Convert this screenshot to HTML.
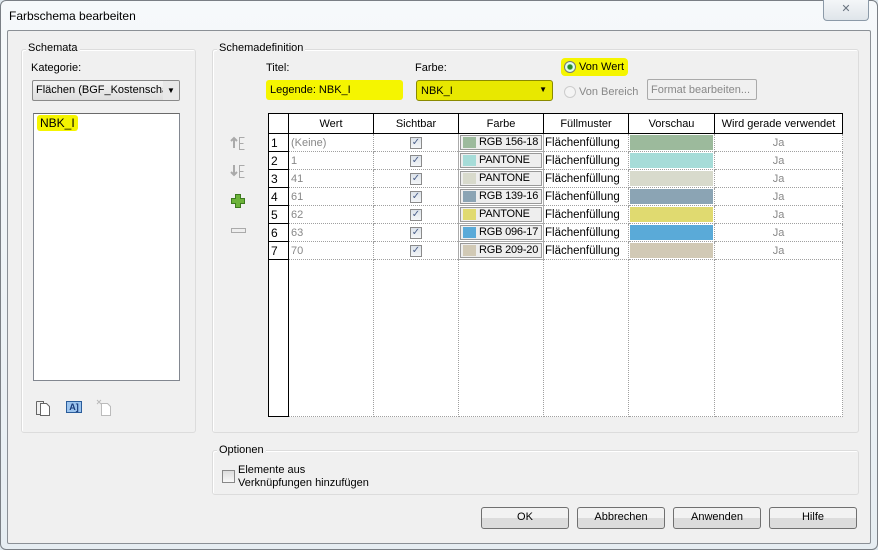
<!DOCTYPE html>
<html><head><meta charset="utf-8"><style>
*{box-sizing:border-box;margin:0;padding:0}
body{width:878px;height:550px;overflow:hidden;background:#dfe8ee;font-family:"Liberation Sans",sans-serif;font-size:11px;color:#000;position:relative}
.a{position:absolute}
.win{left:0;top:0;width:878px;height:550px;background:linear-gradient(#f6f9fb,#e6edf2);border:1px solid #7a7f85;border-radius:6px}
.panel{left:7px;top:30px;width:864px;height:514px;background:#f0f0f0;border:1px solid #8b9096;border-radius:2px}
.grp{border:1px solid #dcdcdc;border-radius:3px;box-shadow:inset 1px 1px 0 #fff}
.lbl{background:#f0f0f0;padding:0 2px}
.btn{border:1px solid #707070;border-radius:3px;background:linear-gradient(#f2f2f2 50%,#dcdcdc 50%);text-align:center;line-height:19px}
table{border-collapse:collapse;table-layout:fixed;position:absolute;left:268px;top:113px;width:574px;background:#fff;font-size:11px}
td,th{height:17px;border:1px dotted #a0a0a0;padding:1px 2px 0;white-space:nowrap;overflow:hidden;line-height:15px}
th{font-weight:normal;height:20px;border:1px solid #000;background:#fff;text-align:center}
td.n{border:1px solid #000;background:#fff;font-size:12px}
td.g{color:#888}
.cb{display:inline-block;width:12px;height:12px;border:1px solid #8a8a8a;background:linear-gradient(#dde3ea,#f4f6f8);font-size:10px;line-height:10px;color:#4a5f8a;text-align:center;vertical-align:middle}
.fb{padding:0 1px;border:1px solid #aaa}
.fb div{display:flex;align-items:center;height:15px;border:1px solid #999;background:#eee;font-size:11px;overflow:hidden;letter-spacing:-0.2px}
.fb span{display:inline-block;flex:none;width:13px;height:11px;margin:0 3px 0 2px}
.pv{padding:1px}
.pv div{height:15px}
.ff{font-size:11.5px;padding:1px 1px 0}
</style></head><body>
<div class="a win"></div>
<div class="a" style="left:9px;top:9px;font-size:12px">Farbschema bearbeiten</div>
<div class="a" style="left:823px;top:0;width:46px;height:21px;border:1px solid #8c9aa8;border-top:none;border-radius:0 0 4px 4px;background:linear-gradient(#f4f6f8,#dfe5ea);text-align:center;color:#6a7480;font-size:11px;line-height:19px">✕</div>
<div class="a panel"></div>

<div class="a grp" style="left:21px;top:49px;width:175px;height:384px"></div>
<div class="a lbl" style="left:26px;top:42px">Schemata</div>
<div class="a" style="left:31px;top:62px">Kategorie:</div>
<div class="a" style="left:32px;top:80px;width:148px;height:21px;border:1px solid #8a8a8a;border-radius:2px;background:linear-gradient(#f4f4f4,#dedede);padding:3px 3px;white-space:nowrap;overflow:hidden">Flächen (BGF_Kostenschä<span style="position:absolute;right:0;top:0;width:16px;height:19px;background:#e8e8e8;font-size:8px;line-height:19px;text-align:center">▼</span></div>
<div class="a" style="left:33px;top:113px;width:147px;height:268px;background:#fff;border:1px solid #828790;border-top-color:#6a6a6a"></div>
<div class="a" style="left:37px;top:115px;background:#f5f500;padding:1px 3px;border-radius:3px;font-size:12px">NBK_I</div>
<svg class="a" style="left:35px;top:399px" width="18" height="18"><path d="M1.5 2.5h7v2M1.5 2.5v13h4" fill="none" stroke="#666"/><path d="M5.5 4.5h6l3 3v9h-9z" fill="#fff" stroke="#666"/></svg>
<div class="a" style="left:66px;top:401px;width:16px;height:12px;border:1px solid #2a5c9a;background:#9cc4ee;font-size:9px;font-weight:bold;color:#1a3c7a;text-align:center;line-height:10px">A]</div>
<svg class="a" style="left:96px;top:399px" width="18" height="18"><path d="M5.5 4.5h6l3 3v9h-9z" fill="#fff" stroke="#bbb"/><path d="M1 1l4 4M5 1l-4 4" stroke="#bbb"/></svg>

<div class="a grp" style="left:212px;top:49px;width:647px;height:384px"></div>
<div class="a lbl" style="left:217px;top:42px">Schemadefinition</div>
<div class="a" style="left:266px;top:62px">Titel:</div>
<div class="a" style="left:266px;top:80px;width:137px;height:20px;background:#f5f500;border-radius:3px;padding:4px 4px">Legende: NBK_I</div>
<div class="a" style="left:415px;top:62px">Farbe:</div>
<div class="a" style="left:416px;top:80px;width:137px;height:21px;background:#e8e800;border:1px solid #8a8a00;border-radius:3px;padding:4px 4px">NBK_I<span style="position:absolute;right:5px;top:4px;font-size:8px">▼</span></div>
<div class="a" style="left:561px;top:58px;width:67px;height:18px;background:#f5f500;border-radius:4px"></div>
<div class="a" style="left:564px;top:61px;width:12px;height:12px;border-radius:50%;border:1px solid #777;background:radial-gradient(#2a8a2a 30%,#dfe 45%)"></div>
<div class="a" style="left:579px;top:61px">Von Wert</div>
<div class="a" style="left:564px;top:86px;width:12px;height:12px;border-radius:50%;border:1px solid #ccc;background:#f4f4f4"></div>
<div class="a" style="left:579px;top:86px;color:#888">Von Bereich</div>
<div class="a" style="left:647px;top:79px;width:110px;height:21px;border:1px solid #aaa;border-radius:2px;color:#888;padding:4px 3px">Format bearbeiten...</div>

<svg class="a" style="left:229px;top:134px" width="20" height="110">
<path d="M5 4v10M2 7l3-3 3 3" stroke="#aaa" fill="none" stroke-width="2"/><path d="M15.5 3.5h-5v12h5M10.5 9.5h4" stroke="#aaa" fill="none"/>
<path d="M5 31v10M2 38l3 3 3-3" stroke="#aaa" fill="none" stroke-width="2"/><path d="M15.5 31.5h-5v12h5M10.5 37.5h4" stroke="#aaa" fill="none"/>
<path d="M6.5 60.5h5v4h4v5h-4v4h-5v-4h-4v-5h4z" fill="#6cb33a" stroke="#3d7a1e"/>
<rect x="2.5" y="94.5" width="14" height="4" fill="#eee" stroke="#aaa"/>
</svg>

<table>
<colgroup><col style="width:20px"><col style="width:85px"><col style="width:85px"><col style="width:85px"><col style="width:85px"><col style="width:86px"><col style="width:128px"></colgroup>
<tr><th></th><th>Wert</th><th>Sichtbar</th><th>Farbe</th><th>Füllmuster</th><th>Vorschau</th><th>Wird gerade verwendet</th></tr>
<tr><td class="n">1</td><td class="g">(Keine)</td><td style="text-align:center"><span class="cb">✓</span></td><td class="fb"><div><span style="background:#9cba9c"></span>RGB 156-18</div></td><td class="ff">Flächenfüllung</td><td class="pv"><div style="background:#9cba9c"></div></td><td class="g" style="text-align:center">Ja</td></tr>
<tr><td class="n">2</td><td class="g">1</td><td style="text-align:center"><span class="cb">✓</span></td><td class="fb"><div><span style="background:#a6dcd8"></span>PANTONE</div></td><td class="ff">Flächenfüllung</td><td class="pv"><div style="background:#a6dcd8"></div></td><td class="g" style="text-align:center">Ja</td></tr>
<tr><td class="n">3</td><td class="g">41</td><td style="text-align:center"><span class="cb">✓</span></td><td class="fb"><div><span style="background:#d8dacc"></span>PANTONE</div></td><td class="ff">Flächenfüllung</td><td class="pv"><div style="background:#d8dacc"></div></td><td class="g" style="text-align:center">Ja</td></tr>
<tr><td class="n">4</td><td class="g">61</td><td style="text-align:center"><span class="cb">✓</span></td><td class="fb"><div><span style="background:#8ba4b4"></span>RGB 139-16</div></td><td class="ff">Flächenfüllung</td><td class="pv"><div style="background:#8ba4b4"></div></td><td class="g" style="text-align:center">Ja</td></tr>
<tr><td class="n">5</td><td class="g">62</td><td style="text-align:center"><span class="cb">✓</span></td><td class="fb"><div><span style="background:#e0da70"></span>PANTONE</div></td><td class="ff">Flächenfüllung</td><td class="pv"><div style="background:#e0da70"></div></td><td class="g" style="text-align:center">Ja</td></tr>
<tr><td class="n">6</td><td class="g">63</td><td style="text-align:center"><span class="cb">✓</span></td><td class="fb"><div><span style="background:#5aaad8"></span>RGB 096-17</div></td><td class="ff">Flächenfüllung</td><td class="pv"><div style="background:#5aaad8"></div></td><td class="g" style="text-align:center">Ja</td></tr>
<tr><td class="n">7</td><td class="g">70</td><td style="text-align:center"><span class="cb">✓</span></td><td class="fb"><div><span style="background:#d1c9b5"></span>RGB 209-20</div></td><td class="ff">Flächenfüllung</td><td class="pv"><div style="background:#d1c9b5"></div></td><td class="g" style="text-align:center">Ja</td></tr>
<tr><td class="n" style="height:157px"></td><td></td><td></td><td></td><td></td><td></td><td></td></tr>
</table>

<div class="a grp" style="left:212px;top:450px;width:647px;height:45px"></div>
<div class="a lbl" style="left:217px;top:444px">Optionen</div>
<div class="a" style="left:222px;top:470px;width:13px;height:13px;border:1px solid #888;background:linear-gradient(#ddd,#f8f8f8)"></div>
<div class="a" style="left:238px;top:464px;line-height:13px">Elemente aus<br>Verknüpfungen hinzufügen</div>

<div class="a btn" style="left:481px;top:507px;width:88px;height:22px">OK</div>
<div class="a btn" style="left:577px;top:507px;width:88px;height:22px">Abbrechen</div>
<div class="a btn" style="left:673px;top:507px;width:88px;height:22px">Anwenden</div>
<div class="a btn" style="left:769px;top:507px;width:88px;height:22px">Hilfe</div>
</body></html>
